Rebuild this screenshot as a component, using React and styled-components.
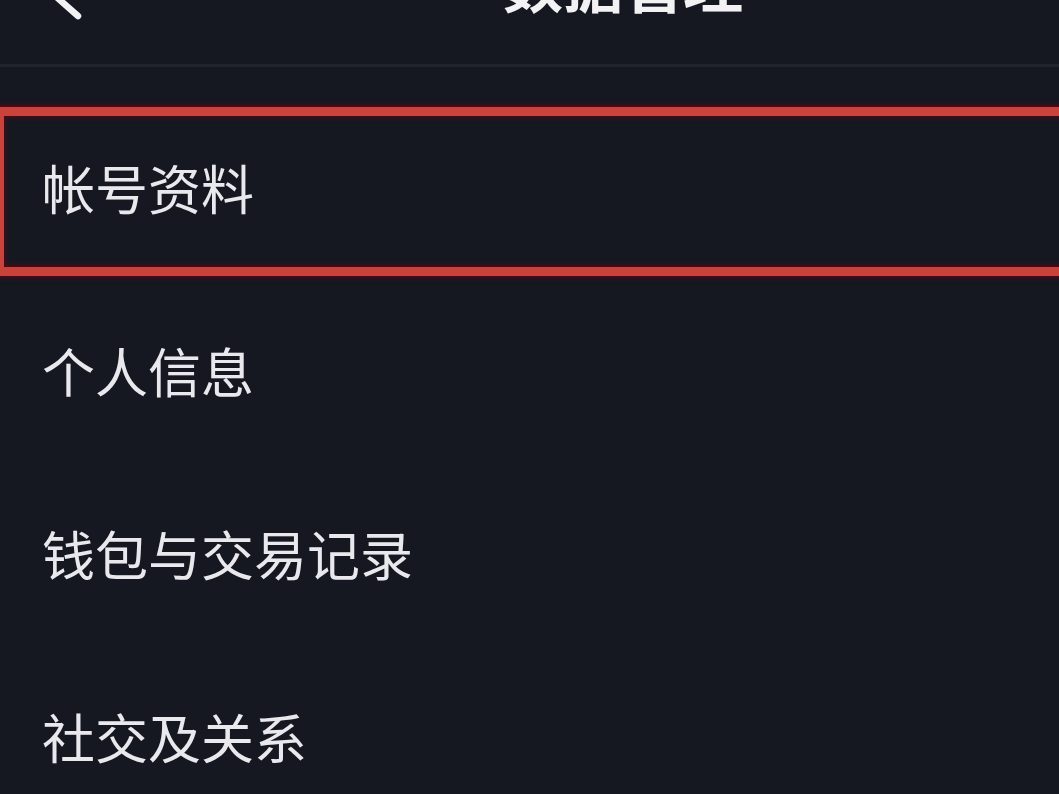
import React from 'react';
import styled, { createGlobalStyle } from 'styled-components';

const GlobalStyle = createGlobalStyle`
  html, body {
    margin: 0;
    padding: 0;
    background: #151821;
    overflow: hidden;
  }
  body {
    font-family: "Noto Sans CJK SC", "Noto Sans", sans-serif;
  }
`;

const Page = styled.div`
  width: 100vw;
  height: 100vh;
  background: #151821;
  color: #ececef;
  overflow: hidden;
`;

const Header = styled.header`
  display: flex;
  align-items: center;
  height: 64px;
  margin-top: -50px;
  padding: 0 0 50px 30px;
  border-bottom: 3px solid #21242e;
`;

const BackIcon = styled.svg`
  width: 60px;
  height: 64px;
  flex: none;
  overflow: visible;
`;

const Title = styled.h1`
  margin: 0 0 0 413px;
  font-size: 60px;
  line-height: 64px;
  font-weight: 700;
  color: #f2f2f4;
  white-space: nowrap;
`;

const List = styled.ul`
  list-style: none;
  margin: 40px 0 0;
  padding: 0;
  display: flex;
  flex-direction: column;
  gap: 14px;
`;

const Row = styled.li`
  box-sizing: border-box;
  height: 169px;
  display: flex;
  align-items: center;
  padding: 0 0 9px 42px;
  font-size: 53px;
  line-height: 1;
  color: #e9e9ed;
  ${p => p.$marked && `
    margin-right: -20px;
    padding-left: 38px;
    border: 9px solid #c9433b;
    border-left-width: 4px;
    box-shadow: 0 0 4px 2px rgba(110, 0, 24, 0.7), inset 0 0 4px 2px rgba(110, 0, 24, 0.6);
  `}
`;

const items = ['帐号资料', '个人信息', '钱包与交易记录', '社交及关系'];

export default function App() {
  return (
    <Page>
      <GlobalStyle />
      <Header>
        <BackIcon viewBox="0 0 60 64">
          <path d="M48 8 L14 36 L48 66" fill="none" stroke="#f2f2f4" strokeWidth="6.5" strokeLinecap="round" strokeLinejoin="round" />
        </BackIcon>
        <Title>数据管理</Title>
      </Header>
      <List>
        {items.map((text, i) => (
          <Row key={text} $marked={i === 0}>{text}</Row>
        ))}
      </List>
    </Page>
  );
}
